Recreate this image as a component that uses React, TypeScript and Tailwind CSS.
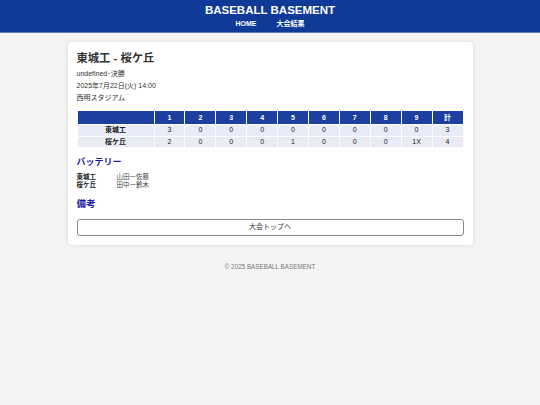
import React from "react";

const font = { fontFamily: '"Liberation Sans", Arial, "Noto Sans CJK JP", sans-serif' };

const innings = ["1", "2", "3", "4", "5", "6", "7", "8", "9", "計"];
const rows = [
  { team: "東城工", scores: ["3", "0", "0", "0", "0", "0", "0", "0", "0", "3"] },
  { team: "桜ケ丘", scores: ["2", "0", "0", "0", "1", "0", "0", "0", "1X", "4"] },
];

export default function App() {
  return (
    <div className="min-h-[405px] bg-[#f4f4f4] text-[#222]" style={font}>
      <header className="bg-[#0f3a97] border-b border-[#5a7bc4] pt-[2px] pb-[2px] text-center text-white">
        <div className="text-[11.5px] font-bold leading-[16px]">BASEBALL BASEMENT</div>
        <nav className="flex justify-center gap-[20px] text-[7px] font-bold leading-[12px]">
          <span>HOME</span>
          <span>大会結果</span>
        </nav>
      </header>

      <main className="mx-auto mt-[9px] w-[405px] rounded-[4px] bg-white px-[9px] pt-[8px] pb-[9px] shadow-[0_0_4px_rgba(0,0,0,0.12)]">
        <h1 className="text-[11.3px] font-bold leading-[16px] text-[#333]">東城工 - 桜ケ丘</h1>
        <div className="mt-[2px] text-[7px] leading-[12px] text-[#333]">
          <p>undefined･決勝</p>
          <p>2025年7月22日(火) 14:00</p>
          <p>西明スタジアム</p>
        </div>

        <table className="mt-[6px] w-full table-fixed border-collapse text-[7px] leading-[10px]">
          <colgroup>
            <col className="w-[77px]" />
            {innings.map((i) => (
              <col key={i} />
            ))}
          </colgroup>
          <thead>
            <tr className="bg-[#1c3fa0] text-white font-bold">
              <th className="h-[14px] border border-white"></th>
              {innings.map((i) => (
                <th key={i} className="h-[14px] border border-white font-bold">{i}</th>
              ))}
            </tr>
          </thead>
          <tbody>
            {rows.map((r) => (
              <tr key={r.team} className="bg-[#e9ebf6] text-[#222]">
                <td className="h-[11.5px] border border-white text-center font-bold">{r.team}</td>
                {r.scores.map((s, idx) => (
                  <td key={idx} className="h-[11.5px] border border-white text-center">{s}</td>
                ))}
              </tr>
            ))}
          </tbody>
        </table>

        <h2 className="mt-[7px] text-[9px] font-bold leading-[14px] text-[#1a1aa8]">バッテリー</h2>
        <div className="mt-[4px] text-[6.5px] leading-[8px]">
          <div className="flex">
            <span className="w-[40px] font-bold">東城工</span>
            <span className="text-[#444]">山田ー佐藤</span>
          </div>
          <div className="flex">
            <span className="w-[40px] font-bold">桜ケ丘</span>
            <span className="text-[#444]">田中ー鈴木</span>
          </div>
        </div>

        <h2 className="mt-[8px] text-[9.5px] font-bold leading-[14px] text-[#1a1aa8]">備考</h2>

        <button className="mt-[8px] block w-full h-[17px] rounded-[3px] border border-[#888] bg-white text-[7px] text-[#333]">
          大会トップへ
        </button>
      </main>

      <footer className="mt-[17px] text-center text-[6.3px] leading-[10px] text-[#777]">© 2025 BASEBALL BASEMENT</footer>
    </div>
  );
}
